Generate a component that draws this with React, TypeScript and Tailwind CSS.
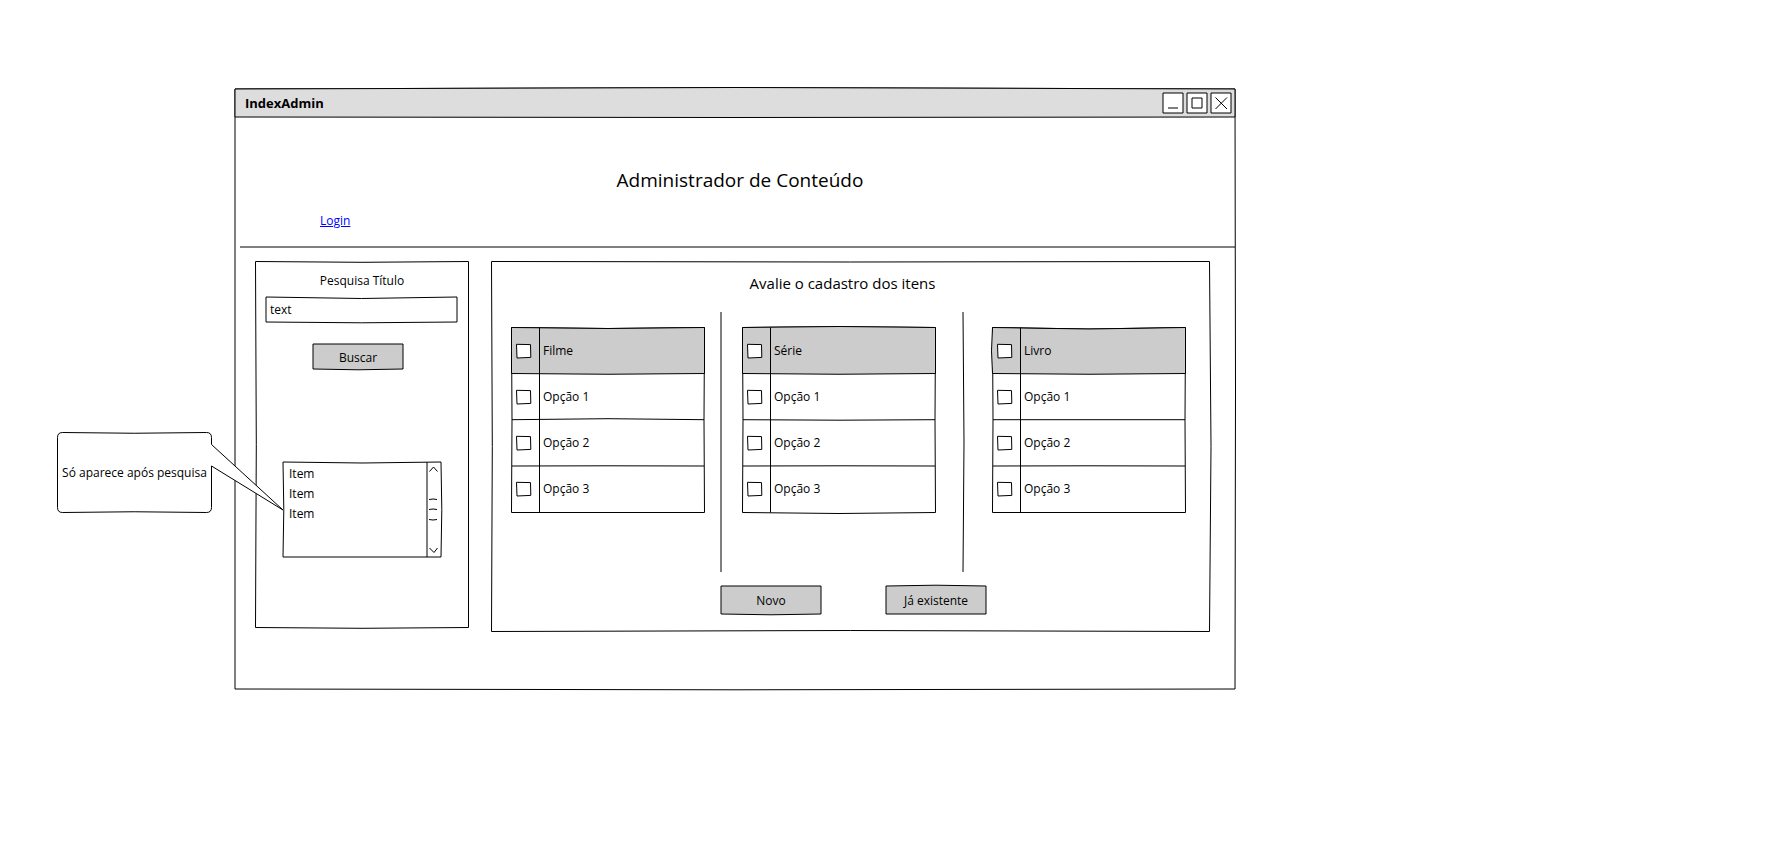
import { useState } from "react";
import type { ReactNode } from "react";

type Bow = [number, number, number, number];

type FrameProps = {
  w: number;
  h: number;
  inset?: number;
  bow?: Bow;
  fill?: string;
  children?: ReactNode;
};

/* Hand-drawn outline: each side is a shallow curve (top, right, bottom, left). */
function outline(w: number, h: number, i: number, bow: Bow) {
  const [t, r, b, l] = bow;
  const x2 = w - i;
  const y2 = h - i;
  return `M${i} ${i}Q${w / 2} ${i + t * 2} ${x2} ${i}Q${x2 + r * 2} ${h / 2} ${x2} ${y2}Q${w / 2} ${y2 + b * 2} ${i} ${y2}Q${i + l * 2} ${h / 2} ${i} ${i}Z`;
}

function Frame({ w, h, inset = 0, bow = [0, 0, 0, 0], fill = "none", children }: FrameProps) {
  return (
    <svg
      aria-hidden="true"
      viewBox={`0 0 ${w} ${h}`}
      preserveAspectRatio="none"
      className="pointer-events-none absolute inset-0 h-full w-full overflow-visible"
      fill="none"
      stroke="#000"
    >
      <path d={outline(w, h, inset, bow)} fill={fill} />
      {children}
    </svg>
  );
}

function Check({ label }: { label: string }) {
  return (
    <span className="relative block size-[14px]">
      <svg aria-hidden="true" viewBox="0 0 14 14" className="absolute inset-0 overflow-visible" fill="#fff" stroke="#000">
        <path d="M-0.5 0.3L13.5 0.6L13.8 13.4L0 14Z" />
      </svg>
      <input
        type="checkbox"
        aria-label={label}
        className="relative block size-[14px] appearance-none checked:bg-black/60"
      />
    </span>
  );
}

type OptionTableProps = { title: string; top: number; bottom: number; left: number; mid: number };

const options = ["Opção 1", "Opção 2", "Opção 3"];

function OptionTable({ title, top, bottom, left, mid }: OptionTableProps) {
  return (
    <div className="relative py-px">
      <Frame w={194} h={186} inset={0.5} bow={[top, -0.5, bottom, 0.5]} fill="#fff">
        <path
          d={`M0.5 0.5Q97 ${0.5 + top * 2} 193.5 0.5L193.5 46.5Q97 48 0.5 46.5Q${0.5 + left * 2} 24 0.5 0.5Z`}
          fill="#ccc"
        />
        <path d={`M1 92.7Q97 ${92.7 + mid * 2} 193 92.7M1 139Q97 138.6 193 139M28.5 0.5V185.5`} />
      </Frame>
      <table className="relative w-full table-fixed border-collapse text-left">
        <colgroup>
          <col className="w-[29px]" />
          <col />
        </colgroup>
        <thead>
          <tr className="h-[46px]">
            <th className="p-0 pl-[6px] align-middle font-normal" scope="col">
              <Check label={`${title}: todos`} />
            </th>
            <th className="p-0 pl-[3px] align-middle font-normal" scope="col">
              {title}
            </th>
          </tr>
        </thead>
        <tbody>
          {options.map((o) => (
            <tr key={o} className="h-[46px]">
              <td className="p-0 pl-[6px] align-middle">
                <Check label={`${title}: ${o}`} />
              </td>
              <td className="p-0 pl-[3px] align-middle">{o}</td>
            </tr>
          ))}
        </tbody>
      </table>
    </div>
  );
}

function Divider({ bend }: { bend: number }) {
  return (
    <svg
      aria-hidden="true"
      viewBox="0 0 2 260"
      preserveAspectRatio="none"
      className="absolute inset-y-0 -right-px h-full w-[2px] overflow-visible"
      fill="none"
      stroke="#000"
    >
      <path d={`M1 0Q${1 + bend * 2} 130 1 260`} />
    </svg>
  );
}

function WindowButton({ label, children }: { label: string; children: ReactNode }) {
  return (
    <button type="button" aria-label={label} className="block size-5">
      <svg viewBox="0 0 20 20" className="size-5 overflow-visible" fill="#fff" stroke="#000">
        <path d="M0 0H20V20H0Z" />
        {children}
      </svg>
    </button>
  );
}

export default function App() {
  const [query, setQuery] = useState("text");

  return (
    <div className="min-h-screen bg-white pt-[89px] pb-20 pl-[235px] font-['Open_Sans','Noto_Sans',sans-serif] text-xs leading-4 text-black">
      <main className="relative w-full max-w-[1000px] pb-[57px]">
        <Frame w={1000} h={600} bow={[-1.5, 0.5, 0.8, 0]}>
          <path d="M0 0Q500 -3 1000 0V28Q500 29 0 28Z" fill="#ddd" stroke="none" />
          <path d="M0 28V0Q500 -3 1000 0V28Q500 29 0 28" />
        </Frame>
        <div className="relative flex h-7 items-center justify-between pr-1 pl-[10px]">
          <h1 className="text-[13px] leading-5 font-bold">IndexAdmin</h1>
          <div className="flex gap-1">
            <WindowButton label="Minimizar">
              <path d="M5 15H15" />
            </WindowButton>
            <WindowButton label="Maximizar">
              <path d="M5 5H15V15H5Z" />
            </WindowButton>
            <WindowButton label="Fechar">
              <path d="M4.5 4.5L16 16M16 4.5L4.5 16" />
            </WindowButton>
          </div>
        </div>

        <header className="relative h-[130px] pt-[49px]">
          <h2 className="pl-[10px] text-center text-[19px] leading-7">Administrador de Conteúdo</h2>
          <div className="mt-[19px] pl-[85px]">
            <a href="#login" className="text-[#0000ff] underline">
              Login
            </a>
          </div>
          <svg
            aria-hidden="true"
            viewBox="0 0 1000 2"
            preserveAspectRatio="none"
            className="absolute -bottom-px left-0 h-[2px] w-full overflow-visible"
            stroke="#000"
          >
            <path d="M5 1H1000" />
          </svg>
        </header>

        <div className="flex items-start gap-[22px] pt-[14px] pr-[25px] pl-5">
          <section className="relative h-[367px] w-[214px] shrink-0">
            <Frame w={214} h={367} inset={0.5} bow={[0.8, 0, 0.8, 0.8]} />
            <div className="relative flex flex-col px-[11px] pt-3">
              <label htmlFor="titulo" className="self-center">
                Pesquisa Título
              </label>
              <div className="relative mt-2 mr-3 h-[25px] w-[191px]">
                <Frame w={191} h={25} bow={[1.5, 0, 0.8, 0]} />
                <input
                  id="titulo"
                  type="text"
                  value={query}
                  onChange={(e) => setQuery(e.target.value)}
                  className="relative block h-full w-full bg-transparent px-1 outline-none"
                />
              </div>
              <button type="button" className="relative mt-[22px] ml-[47px] h-[25px] w-[90px] pt-[2px]">
                <Frame w={90} h={25} bow={[0, 0, 0.8, 0]} fill="#ccc" />
                <span className="relative">Buscar</span>
              </button>

              <div className="relative mt-[93px] ml-[17px] h-[95px] w-[158px]">
                <Frame w={158} h={95} bow={[1, 0.8, 0, 0.8]} fill="#fff">
                  <path d="M144 0V95" />
                  <path d="M146.5 9.5L150.5 5L154.5 9.5M146.5 86L151 90.5L154.5 86" />
                  <path d="M146 37.5Q150 36.5 154 37.5M146 47.5Q150 46.5 154 47.5M146 57.5Q150 58.5 154 57.5" />
                </Frame>
                <select
                  size={4}
                  aria-label="Resultados"
                  className="relative block h-full w-[142px] appearance-none overflow-hidden bg-transparent bg-none pt-[3px] pl-[6px] outline-none"
                >
                  <option className="h-5 leading-5">Item</option>
                  <option className="h-5 leading-5">Item</option>
                  <option className="h-5 leading-5">Item</option>
                </select>

                <aside className="absolute -top-[30px] right-full mr-[71px] flex h-[81px] w-[155px] items-center justify-center whitespace-nowrap">
                  <svg
                    aria-hidden="true"
                    viewBox="0 0 155 81"
                    className="absolute inset-0 overflow-visible"
                    fill="#fff"
                    stroke="#000"
                  >
                    <path d="M5.5 0.5Q77 2 149.5 0.5Q154.5 0.5 154.5 5.5V12.5L226 78L154.5 34V75.5Q154.5 80.5 149.5 80.5Q77 79 5.5 80.5Q0.5 80.5 0.5 75.5V5.5Q0.5 0.5 5.5 0.5Z" />
                  </svg>
                  <span className="relative">Só aparece após pesquisa</span>
                </aside>
              </div>
            </div>
          </section>

          <section className="relative h-[371px] min-w-0 flex-1">
            <Frame w={719} h={371} inset={0.5} bow={[0.5, 1.5, -1, 0.8]} />
            <h3 className="relative pt-[10px] pr-4 text-center text-[15px] leading-6">Avalie o cadastro dos itens</h3>
            <div className="relative mt-[17px] grid h-[260px] grid-cols-[230fr_242fr_247fr]">
              <div className="relative pt-[15px] pr-4 pl-5">
                <OptionTable title="Filme" top={1} bottom={0} left={0} mid={-1} />
                <Divider bend={0} />
              </div>
              <div className="relative pt-[15px] pr-[27px] pl-[21px]">
                <OptionTable title="Série" top={-1} bottom={1} left={0} mid={0.5} />
                <Divider bend={1} />
              </div>
              <div className="pt-[15px] pr-6 pl-[29px]">
                <OptionTable title="Livro" top={1.5} bottom={0} left={-1} mid={0} />
              </div>
            </div>
            <div className="relative mt-[14px] ml-[230px] flex gap-[65px]">
              <button type="button" className="relative h-7 w-[100px] pt-[2px]">
                <Frame w={100} h={28} bow={[0, 0, 0.8, 0]} fill="#ccc" />
                <span className="relative">Novo</span>
              </button>
              <button type="button" className="relative h-7 w-[100px] pt-[2px]">
                <Frame w={100} h={28} bow={[-0.8, 0, 0, 0]} fill="#ccc" />
                <span className="relative">Já existente</span>
              </button>
            </div>
          </section>
        </div>
      </main>
    </div>
  );
}
